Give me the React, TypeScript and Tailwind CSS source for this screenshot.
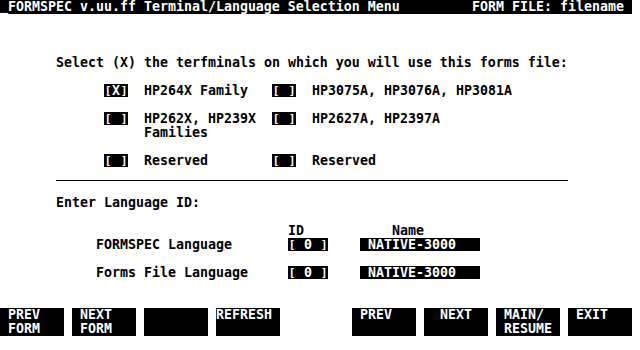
const mono = "font-['DejaVu_Sans_Mono',monospace] font-bold text-[13.29px] leading-[14px]";

// inverse-video field; brackets set smaller so they fit the 13px cell like the terminal font
function Inv({ text, w }: { text: string; w: string }) {
  return (
    <span className={`${w} flex h-[13px] items-start bg-black text-white`}>
      {text.split("").map((c, i) =>
        c === "[" || c === "]" ? (
          <span key={i} className="mt-[1px] flex h-[11px] w-[8px] justify-center text-[11px] leading-[11px]">
            {c}
          </span>
        ) : (
          <span key={i} className="h-[13px] w-[8px] leading-[14px] whitespace-pre">
            {c}
          </span>
        )
      )}
    </span>
  );
}

function Check({ on, label, label2, bw }: { on?: boolean; label: string; label2?: string; bw: string }) {
  return (
    <div className="flex">
      <Inv text={on ? "[X]" : "[ ]"} w="w-[24px]" />
      <div className={`ml-[16px] ${bw} whitespace-pre`}>
        <div className="h-[14px]">{label}</div>
        {label2 && <div className="h-[14px]">{label2}</div>}
      </div>
    </div>
  );
}

function FKey({ top, bottom }: { top?: string; bottom?: string }) {
  return (
    <div className="h-[28px] w-[64px] bg-black text-white whitespace-pre">
      <div className="h-[14px]">{top ?? ""}</div>
      <div className="h-[14px]">{bottom ?? ""}</div>
    </div>
  );
}

export default function App() {
  return (
    <div className={`h-[350px] w-[640px] overflow-hidden bg-white text-black ${mono}`}>
      {/* title bar */}
      <div className="flex h-[14px] w-[632px] bg-black text-white whitespace-pre">
        <span className="w-[472px]">_FORMSPEC v.uu.ff Terminal/Language Selection Menu</span>
        <span>FORM FILE: filename</span>
      </div>

      <div className="mt-[42px] h-[14px] pl-[56px] whitespace-pre">
        Select (X) the terfminals on which you will use this forms file:
      </div>

      <div className="mt-[14px] flex pl-[104px]">
        <Check on label="HP264X Family" bw="w-[128px]" />
        <Check label="HP3075A, HP3076A, HP3081A" bw="w-[200px]" />
      </div>
      <div className="mt-[14px] flex pl-[104px]">
        <Check label="HP262X, HP239X" label2="Families" bw="w-[128px]" />
        <Check label="HP2627A, HP2397A" bw="w-[200px]" />
      </div>
      <div className="mt-[14px] flex pl-[104px]">
        <Check label="Reserved" bw="w-[128px]" />
        <Check label="Reserved" bw="w-[200px]" />
      </div>

      <div className="ml-[56px] mt-[12px] h-px w-[512px] bg-black" />

      <div className="mt-[15px] h-[14px] pl-[56px] whitespace-pre">Enter Language ID:</div>

      <div className="mt-[14px] flex h-[14px] whitespace-pre">
        <span className="ml-[288px] w-[104px]">ID</span>
        <span>Name</span>
      </div>
      <div className="flex h-[14px] whitespace-pre">
        <span className="ml-[96px] w-[192px]">FORMSPEC Language</span>
        <Inv text="[ 0 ]" w="w-[40px]" />
        <span className="w-[32px]" />
        <Inv text=" NATIVE-3000" w="w-[120px]" />
      </div>
      <div className="mt-[14px] flex h-[14px] whitespace-pre">
        <span className="ml-[96px] w-[192px]">Forms File Language</span>
        <Inv text="[ 0 ]" w="w-[40px]" />
        <span className="w-[32px]" />
        <Inv text=" NATIVE-3000" w="w-[120px]" />
      </div>

      {/* function keys */}
      <div className="mt-[28px] flex">
        <div className="flex gap-[8px]">
          <FKey top=" PREV" bottom=" FORM" />
          <FKey top=" NEXT" bottom=" FORM" />
          <FKey />
          <FKey top="REFRESH" />
        </div>
        <div className="ml-[72px] flex gap-[8px]">
          <FKey top=" PREV" />
          <FKey top="  NEXT" />
          <FKey top=" MAIN/" bottom=" RESUME" />
          <FKey top=" EXIT" />
        </div>
      </div>
    </div>
  );
}
